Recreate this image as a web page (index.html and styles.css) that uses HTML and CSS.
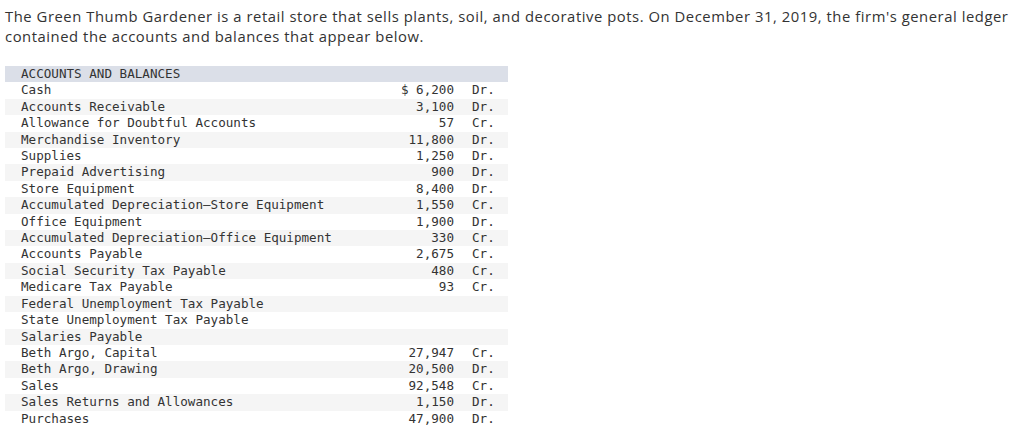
FILE: index.html
```html
<!DOCTYPE html>
<html>
<head>
<meta charset="utf-8">
<link rel="stylesheet" href="styles.css">
</head>
<body>
<div class="page">
<p class="intro">The Green Thumb Gardener is a retail store that sells plants, soil, and decorative pots. On December 31, 2019, the firm's general ledger contained the accounts and balances that appear below.</p>
<table class="ledger">
<thead>
<tr><th colspan="3">ACCOUNTS AND BALANCES</th></tr>
</thead>
<tbody>
<tr><td class="name">Cash</td><td class="amt">$ 6,200</td><td class="type">Dr.</td></tr>
<tr><td class="name">Accounts Receivable</td><td class="amt">3,100</td><td class="type">Dr.</td></tr>
<tr><td class="name">Allowance for Doubtful Accounts</td><td class="amt">57</td><td class="type">Cr.</td></tr>
<tr><td class="name">Merchandise Inventory</td><td class="amt">11,800</td><td class="type">Dr.</td></tr>
<tr><td class="name">Supplies</td><td class="amt">1,250</td><td class="type">Dr.</td></tr>
<tr><td class="name">Prepaid Advertising</td><td class="amt">900</td><td class="type">Dr.</td></tr>
<tr><td class="name">Store Equipment</td><td class="amt">8,400</td><td class="type">Dr.</td></tr>
<tr><td class="name">Accumulated Depreciation—Store Equipment</td><td class="amt">1,550</td><td class="type">Cr.</td></tr>
<tr><td class="name">Office Equipment</td><td class="amt">1,900</td><td class="type">Dr.</td></tr>
<tr><td class="name">Accumulated Depreciation—Office Equipment</td><td class="amt">330</td><td class="type">Cr.</td></tr>
<tr><td class="name">Accounts Payable</td><td class="amt">2,675</td><td class="type">Cr.</td></tr>
<tr><td class="name">Social Security Tax Payable</td><td class="amt">480</td><td class="type">Cr.</td></tr>
<tr><td class="name">Medicare Tax Payable</td><td class="amt">93</td><td class="type">Cr.</td></tr>
<tr><td class="name">Federal Unemployment Tax Payable</td><td class="amt"></td><td class="type"></td></tr>
<tr><td class="name">State Unemployment Tax Payable</td><td class="amt"></td><td class="type"></td></tr>
<tr><td class="name">Salaries Payable</td><td class="amt"></td><td class="type"></td></tr>
<tr><td class="name">Beth Argo, Capital</td><td class="amt">27,947</td><td class="type">Cr.</td></tr>
<tr><td class="name">Beth Argo, Drawing</td><td class="amt">20,500</td><td class="type">Dr.</td></tr>
<tr><td class="name">Sales</td><td class="amt">92,548</td><td class="type">Cr.</td></tr>
<tr><td class="name">Sales Returns and Allowances</td><td class="amt">1,150</td><td class="type">Dr.</td></tr>
<tr><td class="name">Purchases</td><td class="amt">47,900</td><td class="type">Dr.</td></tr>
</tbody>
</table>
</div>
</body>
</html>
```
FILE: styles.css
```css
html, body {
  margin: 0;
  padding: 0;
  background: #ffffff;
}

.page {
  padding: 7px 0 0 5px;
}

.intro {
  margin: 0 0 20px 0;
  font-family: "Open Sans", "Liberation Sans", sans-serif;
  font-size: 14.8px;
  letter-spacing: 0.55px;
  line-height: 19.5px;
  color: #333333;
  max-width: 1014px;
}

.ledger {
  width: 503px;
  border-collapse: collapse;
  border-spacing: 0;
  font-family: "DejaVu Sans Mono", "Liberation Mono", monospace;
  font-size: 12.6px;
  color: #333333;
}

.ledger th,
.ledger td {
  padding: 0;
  height: 16.4px;
  line-height: 16.4px;
  white-space: pre;
}

.ledger th {
  background: #dbdfe8;
  font-weight: normal;
  text-align: left;
  padding-left: 16px;
}

.ledger tbody tr:nth-child(even) {
  background: #f5f5f5;
}

.ledger .name {
  padding-left: 16px;
  text-align: left;
}

.ledger .amt {
  text-align: right;
}

.ledger .type {
  width: 23px;
  padding-left: 18px;
  padding-right: 13px;
  text-align: left;
}
```
